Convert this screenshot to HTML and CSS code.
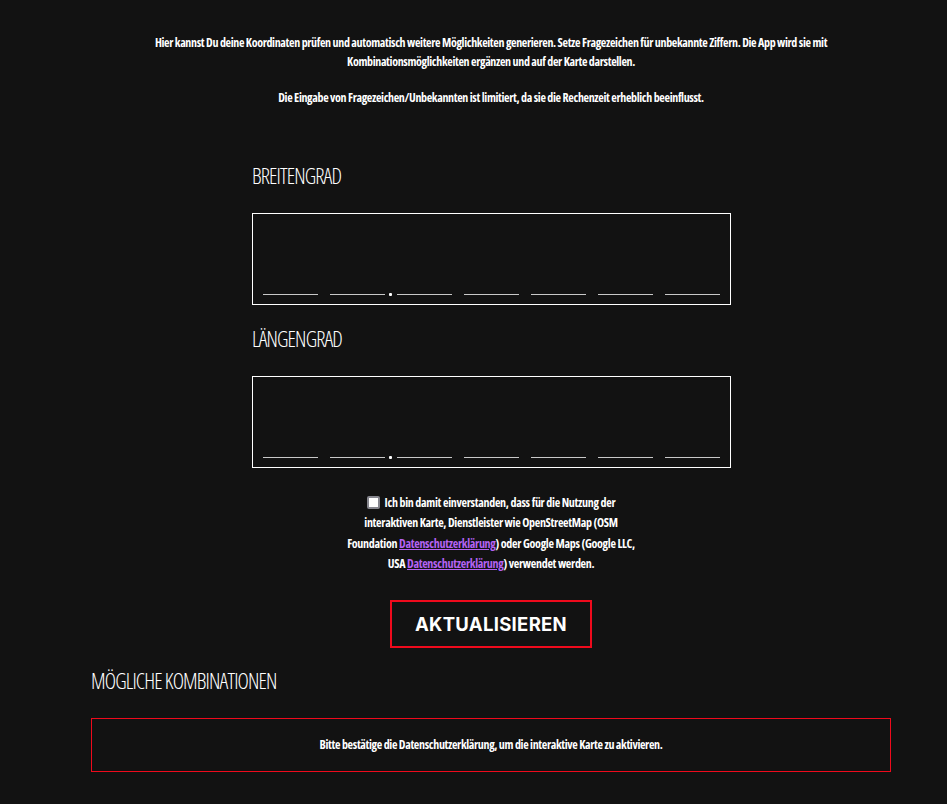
FILE: index.html
```html
<!DOCTYPE html>
<html lang="de">
<head>
<meta charset="utf-8">
<title>Koordinaten prüfen</title>
<link rel="stylesheet" href="styles.css">
</head>
<body>
<main class="page">
  <div class="intro">
    <p>Hier kannst Du deine Koordinaten prüfen und automatisch weitere Möglichkeiten generieren. Setze Fragezeichen für unbekannte Ziffern. Die App wird sie mit Kombinationsmöglichkeiten ergänzen und auf der Karte darstellen.</p>
    <p class="second">Die Eingabe von Fragezeichen/Unbekannten ist limitiert, da sie die Rechenzeit erheblich beeinflusst.</p>
  </div>

  <section class="coords">
    <h2 class="label">BREITENGRAD</h2>
    <div class="coord-box">
      <input class="digit" type="text">
      <input class="digit tight" type="text">
      <span class="sep"></span>
      <input class="digit" type="text">
      <input class="digit" type="text">
      <input class="digit" type="text">
      <input class="digit" type="text">
      <input class="digit last" type="text">
    </div>

    <h2 class="label next">LÄNGENGRAD</h2>
    <div class="coord-box">
      <input class="digit" type="text">
      <input class="digit tight" type="text">
      <span class="sep"></span>
      <input class="digit" type="text">
      <input class="digit" type="text">
      <input class="digit" type="text">
      <input class="digit" type="text">
      <input class="digit last" type="text">
    </div>
  </section>

  <div class="consent-wrap">
    <label class="consent"><input type="checkbox" class="check"> Ich bin damit einverstanden, dass für die Nutzung der interaktiven Karte, Dienstleister wie OpenStreetMap (OSM Foundation <a href="#">Datenschutzerklärung</a>) oder Google Maps (Google LLC, USA <a href="#">Datenschutzerklärung</a>) verwendet werden.</label>
  </div>

  <div class="actions">
    <button class="btn" type="button">AKTUALISIEREN</button>
  </div>

  <h2 class="label combos">MÖGLICHE KOMBINATIONEN</h2>
  <div class="notice">Bitte bestätige die Datenschutzerklärung, um die interaktive Karte zu aktivieren.</div>
</main>
</body>
</html>
```
FILE: styles.css
```css
html, body {
  margin: 0;
  padding: 0;
  background: #121212;
  color: #ffffff;
}

body {
  font-family: "Open Sans", "Liberation Sans", sans-serif;
  font-stretch: 75%;
}

.page {
  width: 800px;
  margin-left: 91px;
  padding-top: 33px;
}

.intro {
  padding: 0 55px;
  text-align: center;
  font-size: 12px;
  font-weight: 700;
  letter-spacing: -0.35px;
  line-height: 19px;
}

.intro p {
  margin: 0;
}

.intro .second {
  margin-top: 17px;
}

.coords {
  width: 479px;
  margin-left: 161px;
}

.label {
  margin: 56px 0 24px;
  font-size: 21.5px;
  line-height: 26px;
  font-weight: 300;
  letter-spacing: -0.85px;
  color: #ffffff;
}

.label.next {
  margin-top: 21px;
}

.label.combos {
  margin-top: 20px;
}

.coord-box {
  box-sizing: border-box;
  height: 92px;
  border: 1px solid #ffffff;
  padding: 0 10px 9px;
  display: flex;
  align-items: flex-end;
}

.digit {
  box-sizing: border-box;
  width: 55px;
  height: 44px;
  margin: 0 12px 0 0;
  padding: 0;
  border: 0;
  border-bottom: 1px solid #c8c8c8;
  background: transparent;
  color: #ffffff;
  font-family: inherit;
  font-size: 28px;
  text-align: center;
  outline: none;
}

.digit.tight,
.digit.last {
  margin-right: 0;
}

.sep {
  width: 3px;
  height: 3px;
  margin: 0 5px -1px 4px;
  background: #ffffff;
  border-radius: 1px;
  flex: none;
}

.consent-wrap {
  display: flex;
  justify-content: center;
  margin-top: 25px;
}

.consent {
  width: 300px;
  text-align: center;
  font-size: 12px;
  font-weight: 700;
  letter-spacing: -0.3px;
  line-height: 20.4px;
}

.consent a {
  color: #b563f2;
  text-decoration: underline;
}

.check {
  -webkit-appearance: none;
  appearance: none;
  box-sizing: border-box;
  width: 13px;
  height: 13px;
  margin: 0 3px 0 0;
  border: 2px solid #86868e;
  border-radius: 2px;
  background: #ffffff;
  vertical-align: -2px;
}

.actions {
  display: flex;
  justify-content: center;
  margin-top: 25px;
}

.btn {
  height: 48px;
  padding: 0 23px;
  border: 2px solid #ef0a1c;
  background: transparent;
  color: #ffffff;
  font-family: "Inter", "Roboto", sans-serif;
  font-stretch: 100%;
  font-size: 18.5px;
  font-weight: 700;
  letter-spacing: 0.3px;
  cursor: pointer;
}

.notice {
  box-sizing: border-box;
  height: 54px;
  border: 1px solid #ef0a1c;
  display: flex;
  align-items: center;
  justify-content: center;
  font-size: 12px;
  font-weight: 700;
  letter-spacing: -0.35px;
}
```
